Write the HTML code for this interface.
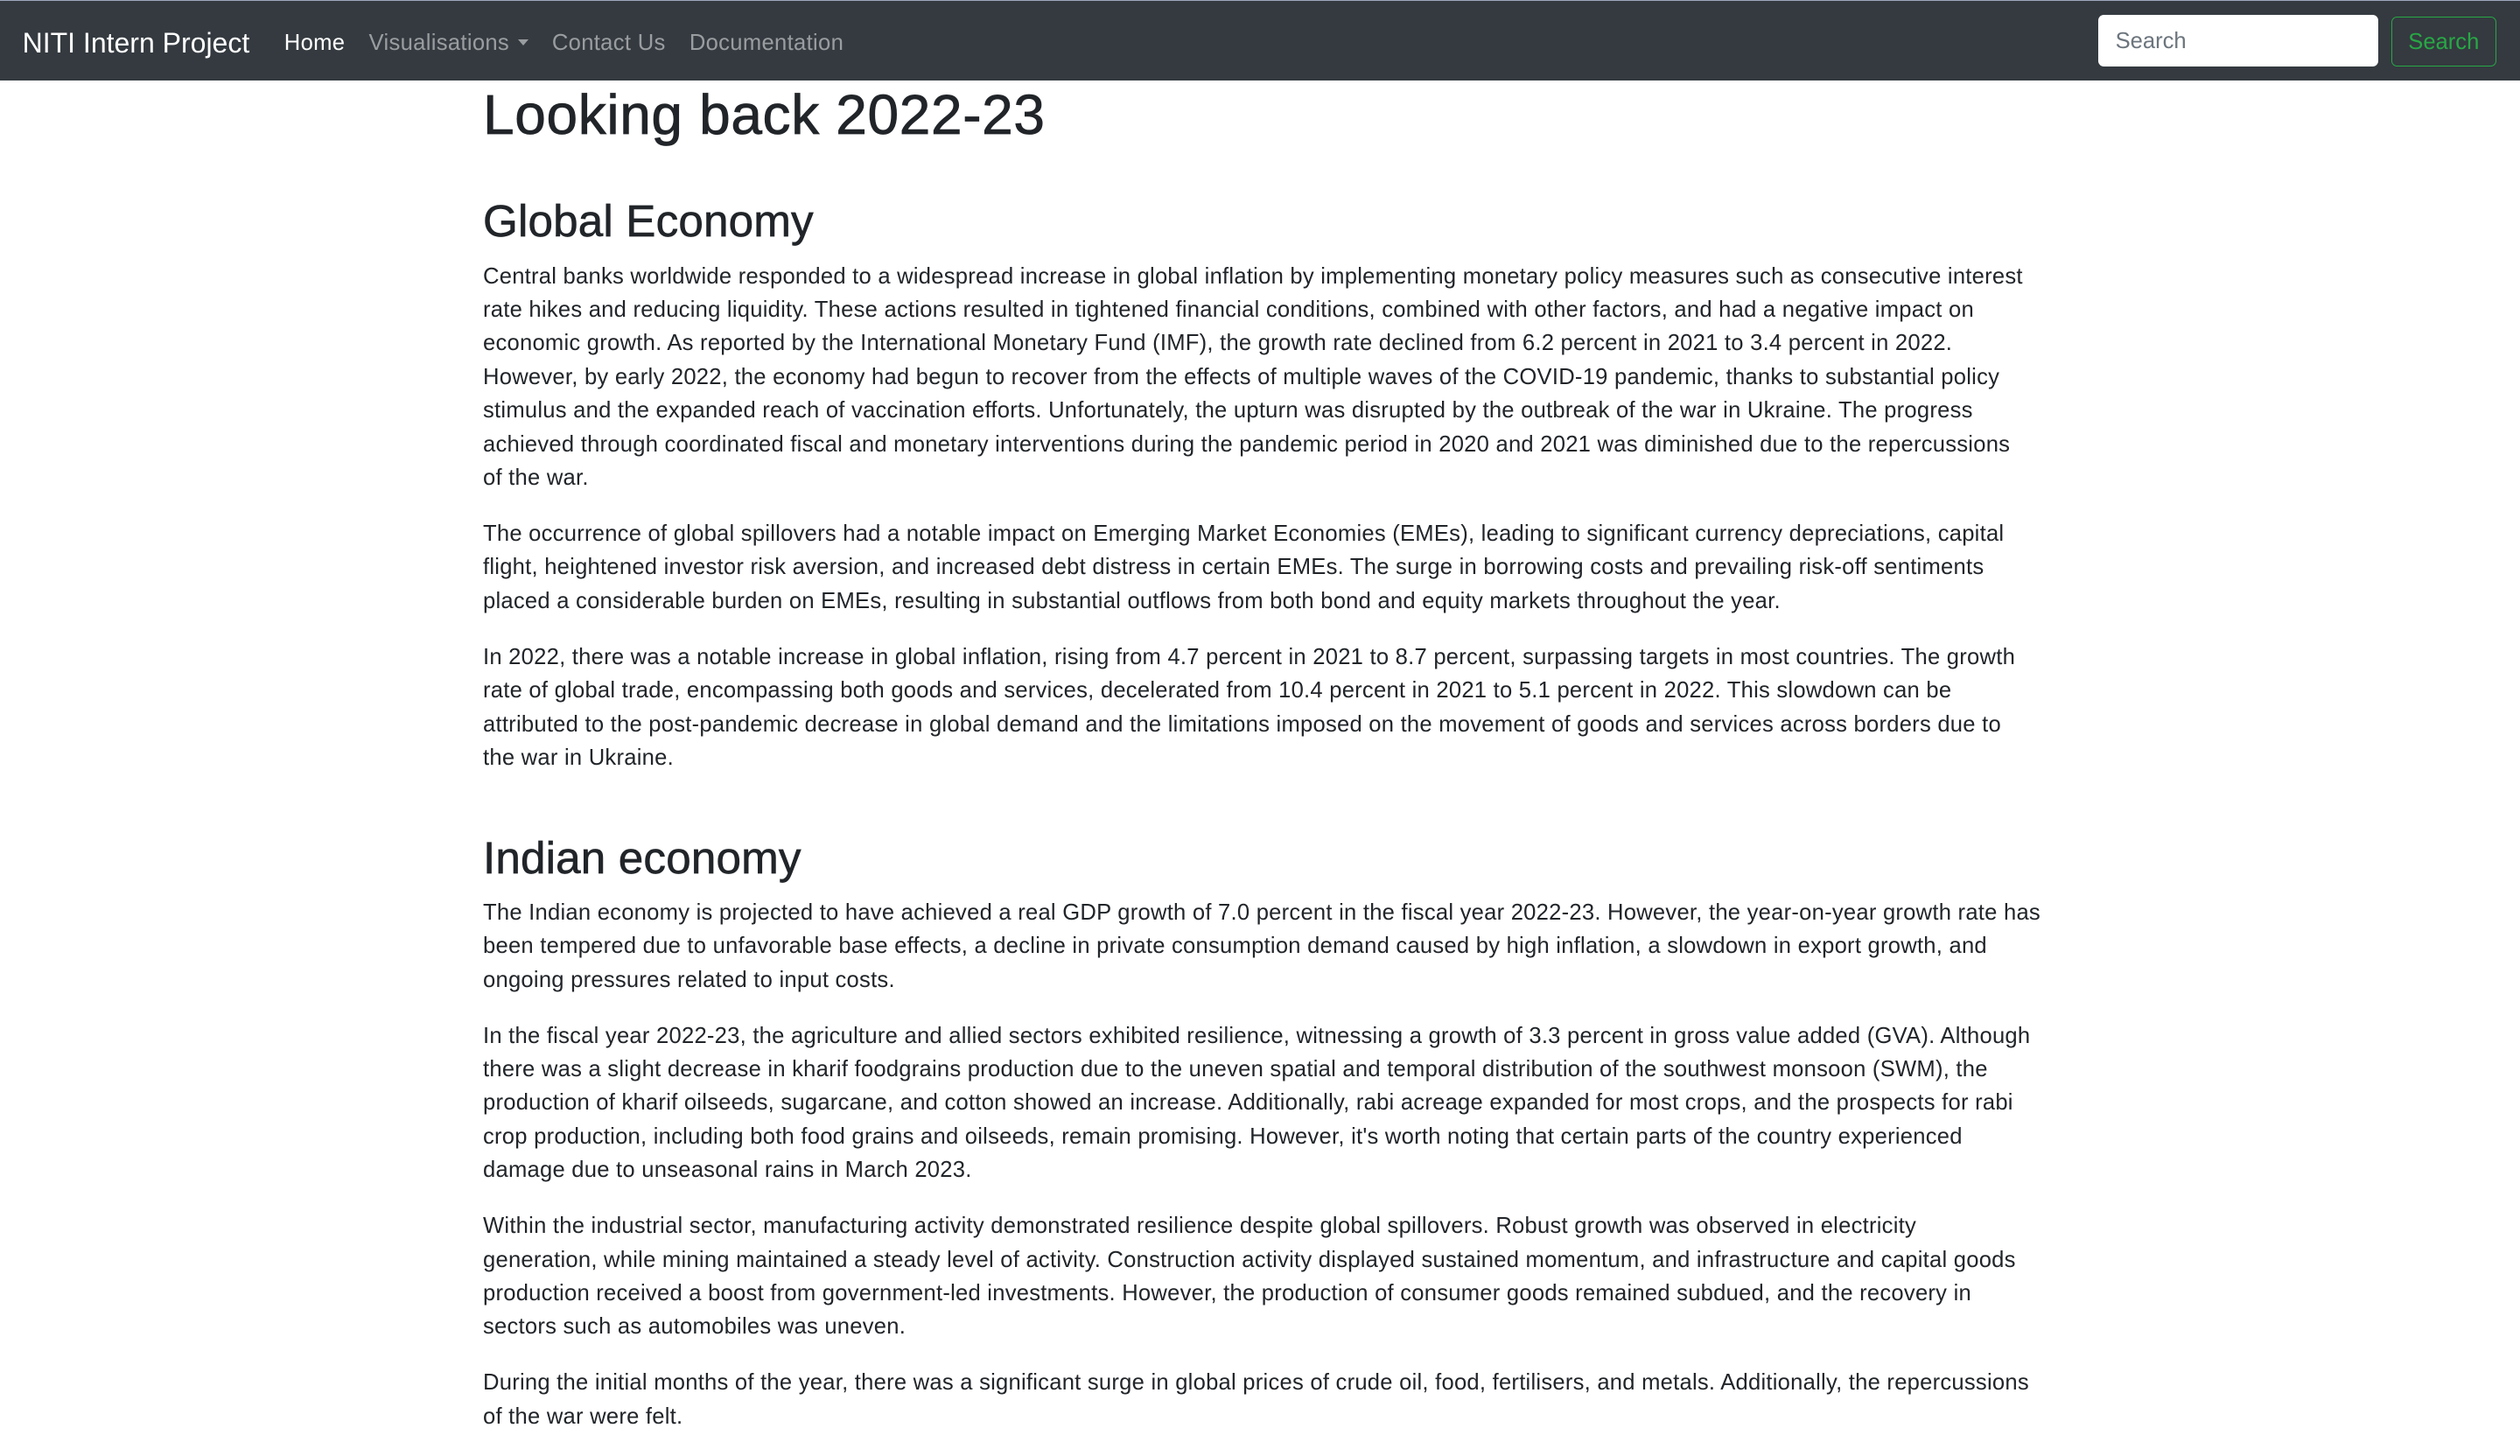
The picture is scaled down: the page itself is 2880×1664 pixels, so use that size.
<!DOCTYPE html>
<html style="height:1580px;overflow:hidden"><head><meta charset="utf-8">
<style>
html,body{margin:0;padding:0;}
body{width:1800px;height:987.5px;overflow:hidden;zoom:1.6;font-family:"Liberation Sans",sans-serif;color:#212529;background:#fff;font-size:16px;line-height:24px;letter-spacing:0.15px;}
.nav{position:relative;height:57px;background:#343a40;border-top:1.2px solid #9ea7bd;letter-spacing:0;}
.brand{position:absolute;left:16px;top:15px;font-size:20px;line-height:30px;color:#fff;}
.links{position:absolute;left:203px;top:18px;font-size:16px;line-height:24px;letter-spacing:0.2px;}
.links span{color:rgba(255,255,255,.5);margin-right:17px;}
.links span.a{color:#fff;}
.caret{display:inline-block;width:0;height:0;border-left:4px solid transparent;border-right:4px solid transparent;border-top:4.5px solid rgba(255,255,255,.5);vertical-align:3px;margin-left:6px;}
.inp{position:absolute;left:1499px;top:10px;width:200px;height:37px;box-sizing:border-box;background:#fff;border-radius:4px;color:#6c757d;padding:0 12px;line-height:38px;font-size:16px;}
.btn{position:absolute;left:1708px;top:11px;width:75px;height:36px;box-sizing:border-box;border:1px solid #28a745;border-radius:4px;color:#28a745;text-align:center;line-height:35px;font-size:16px;}
.c{position:absolute;left:345px;top:58px;width:1110px;}
h1{font-size:40px;line-height:48px;font-weight:500;margin:0 0 8px;letter-spacing:0.4px;-webkit-text-stroke:0.5px #212529;}
h2{font-size:32px;line-height:38.4px;font-weight:500;margin:33px 0 8px;letter-spacing:0.1px;-webkit-text-stroke:0.4px #212529;}
p{margin:0 0 16px;white-space:nowrap;}
</style></head><body>
<div class="nav">
<div class="brand">NITI Intern Project</div>
<div class="links"><span class="a">Home</span><span>Visualisations<i class="caret"></i></span><span>Contact Us</span><span>Documentation</span></div>
<div class="inp">Search</div>
<div class="btn">Search</div>
</div>
<div class="c">
<h1>Looking back 2022-23</h1>
<h2>Global Economy</h2>
<p>Central banks worldwide responded to a widespread increase in global inflation by implementing monetary policy measures such as consecutive interest<br>rate hikes and reducing liquidity. These actions resulted in tightened financial conditions, combined with other factors, and had a negative impact on<br>economic growth. As reported by the International Monetary Fund (IMF), the growth rate declined from 6.2 percent in 2021 to 3.4 percent in 2022.<br>However, by early 2022, the economy had begun to recover from the effects of multiple waves of the COVID-19 pandemic, thanks to substantial policy<br>stimulus and the expanded reach of vaccination efforts. Unfortunately, the upturn was disrupted by the outbreak of the war in Ukraine. The progress<br>achieved through coordinated fiscal and monetary interventions during the pandemic period in 2020 and 2021 was diminished due to the repercussions<br>of the war.</p>
<p>The occurrence of global spillovers had a notable impact on Emerging Market Economies (EMEs), leading to significant currency depreciations, capital<br>flight, heightened investor risk aversion, and increased debt distress in certain EMEs. The surge in borrowing costs and prevailing risk-off sentiments<br>placed a considerable burden on EMEs, resulting in substantial outflows from both bond and equity markets throughout the year.</p>
<p>In 2022, there was a notable increase in global inflation, rising from 4.7 percent in 2021 to 8.7 percent, surpassing targets in most countries. The growth<br>rate of global trade, encompassing both goods and services, decelerated from 10.4 percent in 2021 to 5.1 percent in 2022. This slowdown can be<br>attributed to the post-pandemic decrease in global demand and the limitations imposed on the movement of goods and services across borders due to<br>the war in Ukraine.</p>
<h2 style="margin-top:40px">Indian economy</h2>
<p>The Indian economy is projected to have achieved a real GDP growth of 7.0 percent in the fiscal year 2022-23. However, the year-on-year growth rate has<br>been tempered due to unfavorable base effects, a decline in private consumption demand caused by high inflation, a slowdown in export growth, and<br>ongoing pressures related to input costs.</p>
<p>In the fiscal year 2022-23, the agriculture and allied sectors exhibited resilience, witnessing a growth of 3.3 percent in gross value added (GVA). Although<br>there was a slight decrease in kharif foodgrains production due to the uneven spatial and temporal distribution of the southwest monsoon (SWM), the<br>production of kharif oilseeds, sugarcane, and cotton showed an increase. Additionally, rabi acreage expanded for most crops, and the prospects for rabi<br>crop production, including both food grains and oilseeds, remain promising. However, it's worth noting that certain parts of the country experienced<br>damage due to unseasonal rains in March 2023.</p>
<p>Within the industrial sector, manufacturing activity demonstrated resilience despite global spillovers. Robust growth was observed in electricity<br>generation, while mining maintained a steady level of activity. Construction activity displayed sustained momentum, and infrastructure and capital goods<br>production received a boost from government-led investments. However, the production of consumer goods remained subdued, and the recovery in<br>sectors such as automobiles was uneven.</p>
<p>During the initial months of the year, there was a significant surge in global prices of crude oil, food, fertilisers, and metals. Additionally, the repercussions<br>of the war were felt.</p>
</div>
</body></html>
